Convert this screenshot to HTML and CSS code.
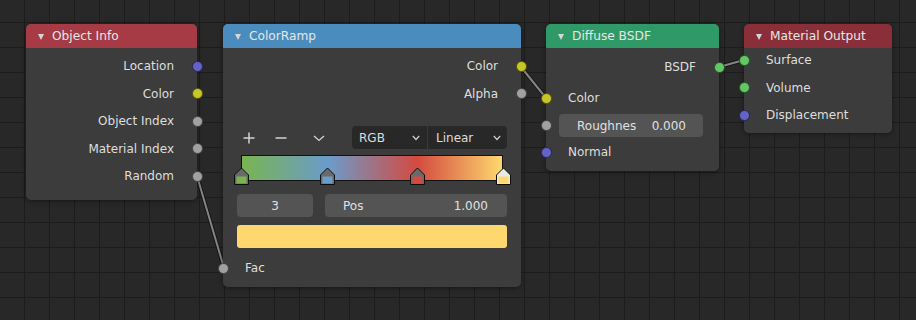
FILE: index.html
```html
<!DOCTYPE html>
<html>
<head>
<meta charset="utf-8">
<link rel="stylesheet" href="styles.css">
</head>
<body>
<div class="editor">
  <svg class="links" width="916" height="320" viewBox="0 0 916 320">
    <g stroke-linecap="round">
      <line x1="197" y1="176" x2="224" y2="268" class="link-shadow"/>
      <line x1="197" y1="176" x2="224" y2="268" class="link"/>
      <line x1="521" y1="67" x2="546" y2="98" class="link-shadow"/>
      <line x1="521" y1="67" x2="546" y2="98" class="link"/>
      <line x1="719" y1="67" x2="744" y2="60" class="link-shadow"/>
      <line x1="719" y1="67" x2="744" y2="60" class="link"/>
    </g>
  </svg>

  <div class="node node-objinfo">
    <div class="header hdr-input"><span class="tri"></span>Object Info</div>
    <div class="body body-objinfo">
      <div class="row out">Location<span class="socket s-vec"></span></div>
      <div class="row out">Color<span class="socket s-col"></span></div>
      <div class="row out">Object Index<span class="socket s-val"></span></div>
      <div class="row out">Material Index<span class="socket s-val"></span></div>
      <div class="row out">Random<span class="socket s-val"></span></div>
    </div>
  </div>

  <div class="node node-ramp">
    <div class="header hdr-conv"><span class="tri"></span>ColorRamp</div>
    <div class="body body-ramp">
      <div class="row out">Color<span class="socket s-col"></span></div>
      <div class="row out">Alpha<span class="socket s-val"></span></div>
      <div class="controls">
        <div class="icon-btns">
          <svg class="ico ico-plus" width="12" height="12" viewBox="0 0 12 12"><path d="M6 0.5V11.5M0.5 6H11.5"/></svg>
          <svg class="ico ico-minus" width="12" height="12" viewBox="0 0 12 12"><path d="M0.5 6H11.5"/></svg>
          <svg class="ico ico-chev" width="12" height="12" viewBox="0 0 12 12"><path d="M1 4L6 8.5L11 4"/></svg>
        </div>
        <div class="dropdowns">
          <div class="dropdown dd-left"><span>RGB</span><svg class="chev" width="8" height="6" viewBox="0 0 8 6"><path d="M0.8 1L4 4.5L7.2 1"/></svg></div>
          <div class="dropdown dd-right"><span>Linear</span><svg class="chev" width="8" height="6" viewBox="0 0 8 6"><path d="M0.8 1L4 4.5L7.2 1"/></svg></div>
        </div>
      </div>
      <div class="ramp">
        <div class="ramp-bar"></div>
        <svg class="stop" style="left:0%" width="15" height="18" viewBox="0 0 15 18"><path class="stop-roof" d="M0.5 17.5V8L7.5 1L14.5 8V17.5Z"/><rect x="2.5" y="9.5" width="10" height="7" fill="#7ab44f"/></svg>
        <svg class="stop" style="left:33%" width="15" height="18" viewBox="0 0 15 18"><path class="stop-roof" d="M0.5 17.5V8L7.5 1L14.5 8V17.5Z"/><rect x="2.5" y="9.5" width="10" height="7" fill="#6a9ccc"/></svg>
        <svg class="stop" style="left:67.5%" width="15" height="18" viewBox="0 0 15 18"><path class="stop-roof" d="M0.5 17.5V8L7.5 1L14.5 8V17.5Z"/><rect x="2.5" y="9.5" width="10" height="7" fill="#d44a40"/></svg>
        <svg class="stop" style="left:100%" width="15" height="18" viewBox="0 0 15 18"><path class="stop-roof active" d="M0.5 17.5V8L7.5 1L14.5 8V17.5Z"/><rect x="2.5" y="9.5" width="10" height="7" fill="#fed86e"/></svg>
      </div>
      <div class="fields">
        <div class="field f-index">3</div>
        <div class="field f-pos"><span>Pos</span><span>1.000</span></div>
      </div>
      <div class="swatch"></div>
      <div class="row in row-fac"><span class="socket s-val"></span>Fac</div>
    </div>
  </div>

  <div class="node node-diffuse">
    <div class="header hdr-shader"><span class="tri"></span>Diffuse BSDF</div>
    <div class="body body-diffuse">
      <div class="row out">BSDF<span class="socket s-shd"></span></div>
      <div class="row in row-dcolor"><span class="socket s-col"></span>Color</div>
      <div class="row-field"><span class="socket s-val"></span><div class="field f-rough"><span>Roughnes</span><span>0.000</span></div></div>
      <div class="row in row-normal"><span class="socket s-vec"></span>Normal</div>
    </div>
  </div>

  <div class="node node-output">
    <div class="header hdr-output"><span class="tri"></span>Material Output</div>
    <div class="body body-output">
      <div class="row in row-first"><span class="socket s-shd"></span>Surface</div>
      <div class="row in"><span class="socket s-shd"></span>Volume</div>
      <div class="row in"><span class="socket s-vec"></span>Displacement</div>
    </div>
  </div>
</div>
</body>
</html>
```

FILE: styles.css
```css
* { box-sizing: border-box; }
html, body { margin: 0; padding: 0; }
body {
  font-family: "DejaVu Sans", "Liberation Sans", sans-serif;
  font-size: 12px;
  color: #dedede;
}
.editor {
  position: relative;
  width: 916px;
  height: 320px;
  overflow: hidden;
  background-color: #282828;
  background-image:
    linear-gradient(to right, #1c1c1c 1px, transparent 1px),
    linear-gradient(to bottom, #1c1c1c 1px, transparent 1px);
  background-size: 25px 25px;
  background-position: 24px 22px;
}
.links { position: absolute; left: 0; top: 0; z-index: 0; }
.link-shadow { stroke: rgba(0, 0, 0, 0.45); stroke-width: 4; }
.link { stroke: #848484; stroke-width: 2; }

.node {
  position: absolute;
  top: 24px;
  z-index: 1;
  background: rgba(61, 61, 61, 0.96);
  border-radius: 5px;
  box-shadow: 0 1px 5px rgba(0, 0, 0, 0.45);
}
.node-objinfo { left: 26px; width: 171px; height: 176px; }
.node-ramp { left: 223px; width: 298px; height: 263px; }
.node-diffuse { left: 546px; width: 173px; height: 147px; }
.node-output { left: 744px; width: 148px; height: 109px; }

.header {
  height: 24px;
  display: flex;
  align-items: center;
  padding-left: 12px;
  border-radius: 5px 5px 0 0;
  color: #e6e6e6;
  font-size: 12.2px;
}
.tri {
  width: 0;
  height: 0;
  border-left: 3.5px solid transparent;
  border-right: 3.5px solid transparent;
  border-top: 6px solid #d6d6d6;
  margin-right: 8px;
  margin-top: 1px;
}
.hdr-input { background: #a63a45; }
.hdr-conv { background: #4a8cbd; }
.hdr-shader { background: #2f9a67; }
.hdr-output { background: #8a2f39; }

.body { display: flex; flex-direction: column; }
.body-objinfo { padding-top: 4.5px; }
.body-ramp { padding-top: 4.5px; }
.body-diffuse { padding-top: 5.25px; }

.row {
  position: relative;
  height: 27.5px;
  display: flex;
  align-items: center;
  white-space: nowrap;
}
.row.out { justify-content: flex-end; padding-right: 23px; }
.row.in { padding-left: 22px; }

.socket {
  position: absolute;
  top: 50%;
  width: 11px;
  height: 11px;
  margin-top: -5.5px;
  border-radius: 50%;
  border: 1px solid rgba(0, 0, 0, 0.55);
}
.row.out .socket { right: -5.5px; }
.row.in .socket, .row-field .socket { left: -5.5px; }
.s-vec { background: #6363c7; }
.s-col { background: #c7c729; }
.s-val { background: #a1a1a1; }
.s-shd { background: #63c763; }

/* ColorRamp controls */
.controls {
  margin: 18.5px 14px 0 14px;
  height: 23px;
  display: flex;
  justify-content: space-between;
  align-items: center;
}
.icon-btns { display: flex; align-items: center; padding-left: 6px; }
.ico path { fill: none; stroke: #d2d2d2; stroke-width: 1.5; }
.ico-plus { margin-right: 20px; }
.ico-minus { margin-right: 26px; }
.ico-chev path { stroke-width: 1.3; }
.dropdowns { display: flex; height: 23px; width: 155px; }
.dropdown {
  height: 23px;
  background: #282828;
  display: flex;
  align-items: center;
  justify-content: space-between;
  color: #dcdcdc;
}
.dd-left {
  width: 76px;
  border-radius: 4px 0 0 4px;
  padding: 0 7px 0 7px;
  border-right: 1px solid #3a3a3a;
}
.dd-right {
  width: 79px;
  border-radius: 0 4px 4px 0;
  padding: 0 6px 0 8px;
}
.chev path { fill: none; stroke: #cfcfcf; stroke-width: 1.2; }

.ramp {
  position: relative;
  margin: 6px 18px 0 18px;
  height: 29px;
}
.ramp-bar {
  height: 26px;
  border: 1px solid #111;
  background: linear-gradient(to right, #79b44f 0%, #6a9ccc 33%, #d44a40 67.5%, #fed86e 100%);
}
.stop {
  position: absolute;
  top: 12px;
  margin-left: -7.5px;
}
.stop-roof { fill: #6a6a6a; stroke: #0d0d0d; stroke-width: 1; }
.stop-roof.active { fill: #e8e8e8; }

.fields {
  margin: 10px 14px 0 14px;
  height: 23px;
  display: flex;
  gap: 12px;
}
.field {
  height: 23px;
  background: #545454;
  border-radius: 4px;
  display: flex;
  align-items: center;
  color: #e0e0e0;
}
.f-index { width: 76px; justify-content: center; }
.f-pos { flex: 1; justify-content: space-between; padding: 0 19px 0 18px; }

.swatch {
  margin: 8px 14px 0 14px;
  height: 23px;
  background: #fed86e;
  border-radius: 3px;
}
.row-fac { margin-top: 6.25px; }

/* Diffuse */
.row-dcolor { margin-top: 3.5px; }
.row-field {
  position: relative;
  margin-top: 2.25px;
  height: 23px;
  padding: 0 16px 0 13px;
}
.f-rough {
  height: 23px;
  justify-content: space-between;
  padding: 0 17px 0 18px;
}
.row-normal { margin-top: 1.25px; }

/* Output */
.row-first { margin-top: -1.75px; }
```
